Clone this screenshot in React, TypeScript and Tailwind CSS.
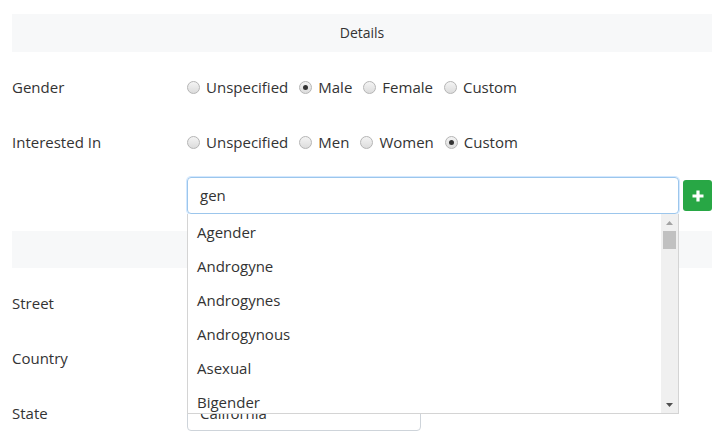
import React from "react";

function Radio({ checked, label }: { checked?: boolean; label: string }) {
  return (
    <label className="flex items-center gap-[6px] mr-[11px]">
      <span className="relative w-[13px] h-[13px] rounded-full border border-[#b5b5b5] bg-gradient-to-b from-[#f4f4f4] to-[#dcdcdc] flex items-center justify-center">
        {checked && <span className="w-[5px] h-[5px] rounded-full bg-[#333]" />}
      </span>
      <span>{label}</span>
    </label>
  );
}

function Row({ label, children }: { label: string; children?: React.ReactNode }) {
  return (
    <div className="flex items-center h-[38px] mt-[17px] pb-[2px]">
      <div className="w-[175px] shrink-0">{label}</div>
      <div className="flex items-center">{children}</div>
    </div>
  );
}

const items = ["Agender", "Androgyne", "Androgynes", "Androgynous", "Asexual", "Bigender", "Bisexual"];

export default function App() {
  return (
    <div
      className="relative w-[719px] h-[439px] overflow-hidden bg-white text-[15px] text-[#333]"
      style={{ fontFamily: '"Open Sans", "Noto Sans", sans-serif' }}
    >
      <div className="pl-[12px] pt-[14px] w-[712px]">
        <div className="h-[38px] bg-[#f7f8f9] flex items-center justify-center text-[14px] pb-[1px]">Details</div>
        <Row label="Gender">
          <Radio label="Unspecified" />
          <Radio label="Male" checked />
          <Radio label="Female" />
          <Radio label="Custom" />
        </Row>
        <Row label="Interested In">
          <Radio label="Unspecified" />
          <Radio label="Men" />
          <Radio label="Women" />
          <Radio label="Custom" checked />
        </Row>
        <div className="flex items-center mt-[15px] h-[37px]">
          <div className="w-[175px] shrink-0" />
          <div className="w-[492px] h-[37px] border border-[#9cc6ec] rounded-[4px] shadow-[0_0_0_1px_rgba(128,189,255,0.35)] flex items-center px-[12px] pb-[1px]">
            gen
          </div>
          <button className="ml-[4px] w-[29px] h-[31px] rounded-[3px] bg-[#28a745] flex items-center justify-center">
            <svg width="12" height="12" viewBox="0 0 12 12">
              <path d="M6 0.5v11M0.5 6h11" stroke="white" strokeWidth="3.2" />
            </svg>
          </button>
        </div>
        <div className="h-[37px] bg-[#f7f8f9] mt-[17px]" />
        <Row label="Street">
          <div className="w-[234px] h-[35px] border border-[#ced4da] rounded-[4px]" />
        </Row>
        <Row label="Country">
          <div className="w-[234px] h-[35px] border border-[#ced4da] rounded-[4px]" />
        </Row>
        <Row label="State">
          <div className="w-[234px] h-[35px] border border-[#ced4da] rounded-[4px] flex items-center px-[12px]">
            California
          </div>
        </Row>
      </div>

      <div className="absolute left-[187px] top-[214px] w-[492px] h-[200px] bg-white border border-[#d4d4d4] border-t-0 overflow-hidden flex">
        <div className="flex-1 pt-[1px]">
          {items.map((it) => (
            <div key={it} className="h-[34px] flex items-center pl-[9px]">
              {it}
            </div>
          ))}
        </div>
        <div className="w-[17px] h-full bg-[#f0f0f0] flex flex-col items-center">
          <div className="h-[17px] flex items-center justify-center">
            <svg width="7" height="4" viewBox="0 0 7 4"><path d="M0 4L3.5 0L7 4Z" fill="#a3a3a3" /></svg>
          </div>
          <div className="w-[13px] h-[18px] bg-[#c1c1c1]" />
          <div className="flex-1" />
          <div className="h-[17px] flex items-center justify-center">
            <svg width="7" height="4" viewBox="0 0 7 4"><path d="M0 0L3.5 4L7 0Z" fill="#505050" /></svg>
          </div>
        </div>
      </div>
    </div>
  );
}
